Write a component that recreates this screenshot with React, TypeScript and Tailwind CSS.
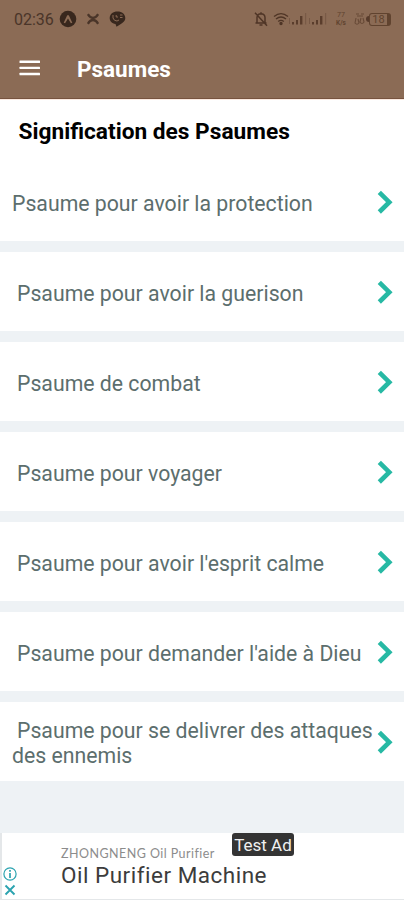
const PSAUMES = [
  { label: 'Psaume pour avoir la protection', indent: false },
  { label: 'Psaume pour avoir la guerison', indent: true },
  { label: 'Psaume de combat', indent: true },
  { label: 'Psaume pour voyager', indent: true },
  { label: "Psaume pour avoir l'esprit calme", indent: true },
  { label: "Psaume pour demander l'aide à Dieu", indent: true },
  { label: 'Psaume pour se delivrer des attaques des ennemis', indent: true },
];

function Signal() {
  return (
    <svg width="18" height="14" viewBox="0 0 18 14" fill="#5a3d2c">
      <rect x="0" y="6" width="1" height="6" opacity="0.4" />
      <rect x="3" y="10" width="2" height="2.5" />
      <rect x="7" y="8" width="2" height="4.5" />
      <rect x="11" y="4" width="2.4" height="8.5" />
      <rect x="16" y="1" width="1.2" height="11.5" opacity="0.35" />
    </svg>
  );
}

function StatusBar() {
  return (
    <div className="flex h-[38px] items-center pl-[14px] pr-[13px] text-[#4a3529]">
      <span className="w-[41px] whitespace-nowrap pt-px text-[16px] leading-none">02:36</span>
      <svg className="ml-[4px]" width="18" height="18" viewBox="0 0 18 18">
        <circle cx="9" cy="9" r="8.3" fill="#38271d" />
        <path d="M4.7 12.8 L8 5.8 Q9 4.4 10 5.8 L13.3 12.8 L11.9 13.2 L9 8.6 L6.1 13.2 Z" fill="#8b6b55" />
      </svg>
      <svg className="ml-[10px]" width="12" height="12" viewBox="0 0 12 12" fill="none" stroke="#4a3529">
        <path d="M.8 1.2 Q3 5 6 5 Q9 5 11.2 1.2 M.8 10.8 Q3 7 6 7 Q9 7 11.2 10.8" strokeWidth="2.3" />
      </svg>
      <svg className="ml-[10px]" width="17" height="18" viewBox="0 0 17 18">
        <path d="M8.5 1.5 C13 1.5 16.3 4.2 16.3 8 C16.3 12 12 13.8 7.5 16.8 L6.5 14 C3 13.5 .7 11.2 .7 8 C.7 4.2 4 1.5 8.5 1.5Z" fill="#38271d" />
        <path d="M4 5 V8 Q5 11 8 11 L10 10 M7.2 5 V7 H9 M11 5 H13.5 M11 7.5 H13.5" fill="none" stroke="#8b6b55" strokeWidth="1" />
      </svg>
      <div className="ml-auto flex items-center">
        <svg width="14" height="16" viewBox="0 0 14 16" fill="none" stroke="#4f3526" strokeWidth="1.5">
          <path d="M3 12 V6.5 Q3.2 3 7 2.8 Q10.8 3 11 6.5 V12 M1.5 12 H12.5 M7 1.2 V3 M5.5 14 H8.5 M1 1.8 L13 14.8" />
        </svg>
        <svg className="ml-[5px]" width="16" height="14" viewBox="0 0 16 14" fill="none" stroke="#4f3526" strokeWidth="1.4">
          <path d="M1 4.5 Q8 -1.3 15 4.5 M3 7 Q8 3 13 7 M5.2 9.5 Q8 7.2 10.8 9.5" />
          <circle cx="8" cy="11.5" r="1" fill="#4f3526" />
        </svg>
        <Signal />
        <span className="w-[2px]" />
        <Signal />
        <span className="ml-[7px] flex w-[14px] flex-col items-center text-[7px] leading-[8px] text-[#60432f]">
          <span>77</span>
          <span className="text-[6.5px] font-bold">K/s</span>
        </span>
        <svg className="ml-[6px]" width="11" height="14" viewBox="0 0 11 14" fill="none" stroke="#684a37" strokeWidth="1.1">
          <path d="M2 2 H5 M7 2 H10 M3 4 H9 M2 6 L1 11 Q3 13.5 5 11 L4 7 M7 6 L6 10 Q8 13 10 10 L9 6" />
        </svg>
        <span className="ml-px flex h-[12px] w-[3px] items-center">
          <span className="h-[6px] w-[3px] rounded-l bg-[#573b2b]" />
        </span>
        <span className="flex h-[13px] w-[22px] items-center justify-center rounded-[3px] border border-r-4 border-[#60432f] text-[11px] leading-none text-[#60432f]">18</span>
      </div>
    </div>
  );
}

function Chevron() {
  return (
    <svg className="shrink-0" width="16" height="24" viewBox="0 0 16 24" fill="none" stroke="#27b9a4" strokeWidth="4.6">
      <path d="M2.3 2.4 L12.3 12.2 L2.3 22" />
    </svg>
  );
}

export default function App() {
  return (
    <div className="flex h-[900px] w-[404px] flex-col overflow-hidden bg-[#eef2f5] font-[Roboto,sans-serif]">
      <header className="h-[99px] shrink-0 border-b border-[#77533e] bg-[#8b6b55]">
        <StatusBar />
        <div className="flex h-[60px] items-center pl-[19px]">
          <svg aria-label="Menu" width="22" height="16" viewBox="0 0 22 16" fill="#fff">
            <rect x="0.5" y="0.6" width="20.5" height="2.4" rx="0.5" />
            <rect x="0.5" y="6.7" width="20.5" height="2.4" rx="0.5" />
            <rect x="0.5" y="12.8" width="20.5" height="2.4" rx="0.5" />
          </svg>
          <h1 className="ml-[36px] pt-[3px] text-[22.5px] font-bold leading-none text-white">Psaumes</h1>
        </div>
      </header>

      <h2 className="flex h-[63px] shrink-0 items-center border-t border-[#fbe9df] bg-white pt-[3px] pl-[18.5px] text-[22.7px] font-bold text-black">
        Signification des Psaumes
      </h2>

      <ul className="flex flex-col gap-[11px]">
        {PSAUMES.map(p => (
          <li key={p.label} className="flex h-[79px] items-center bg-white pl-[12px] pr-[10px] pt-px text-[#5c6e6d]">
            <span className={`w-[365px] shrink-0 pt-[2px] text-[21.25px] leading-[25px] ${p.indent ? 'indent-[5px]' : ''}`}>{p.label}</span>
            <Chevron />
          </li>
        ))}
      </ul>

      <div className="mt-auto flex h-[67px] border-b border-l-2 border-[#e4e7e9] bg-white">
        <div className="flex w-[16px] flex-col items-center justify-end gap-[3px] pb-[3px]">
          <svg width="14" height="14" viewBox="0 0 14 14" fill="none" stroke="#2ba3b0" strokeWidth="1.2">
            <circle cx="7" cy="7" r="6.1" />
            <path d="M7 6 V11 M7 3 V4.7" strokeWidth="1.7" />
          </svg>
          <svg width="12" height="12" viewBox="0 0 12 12" fill="none" stroke="#2ba3b0" strokeWidth="1.9">
            <path d="M1.5 1.5 L10.5 10.5 M10.5 1.5 L1.5 10.5" />
          </svg>
        </div>
        <div className="ml-[43px]">
          <div className="flex h-[29px]">
            <span className="w-[171px] whitespace-nowrap pt-[13px] font-[Lato,sans-serif] text-[12.5px] leading-[16px] tracking-[0.45px] text-[#8c8c8c]">ZHONGNENG Oil Purifier</span>
            <span className="h-[23px] w-[62px] rounded-[3px] bg-[#343434] text-center text-[17px] leading-[24px] text-[#f0f0f0]">Test Ad</span>
          </div>
          <p className="whitespace-nowrap text-[22.5px] leading-[26px] tracking-[0.5px] text-[#3c3c3c]">Oil Purifier Machine</p>
        </div>
      </div>
    </div>
  );
}
